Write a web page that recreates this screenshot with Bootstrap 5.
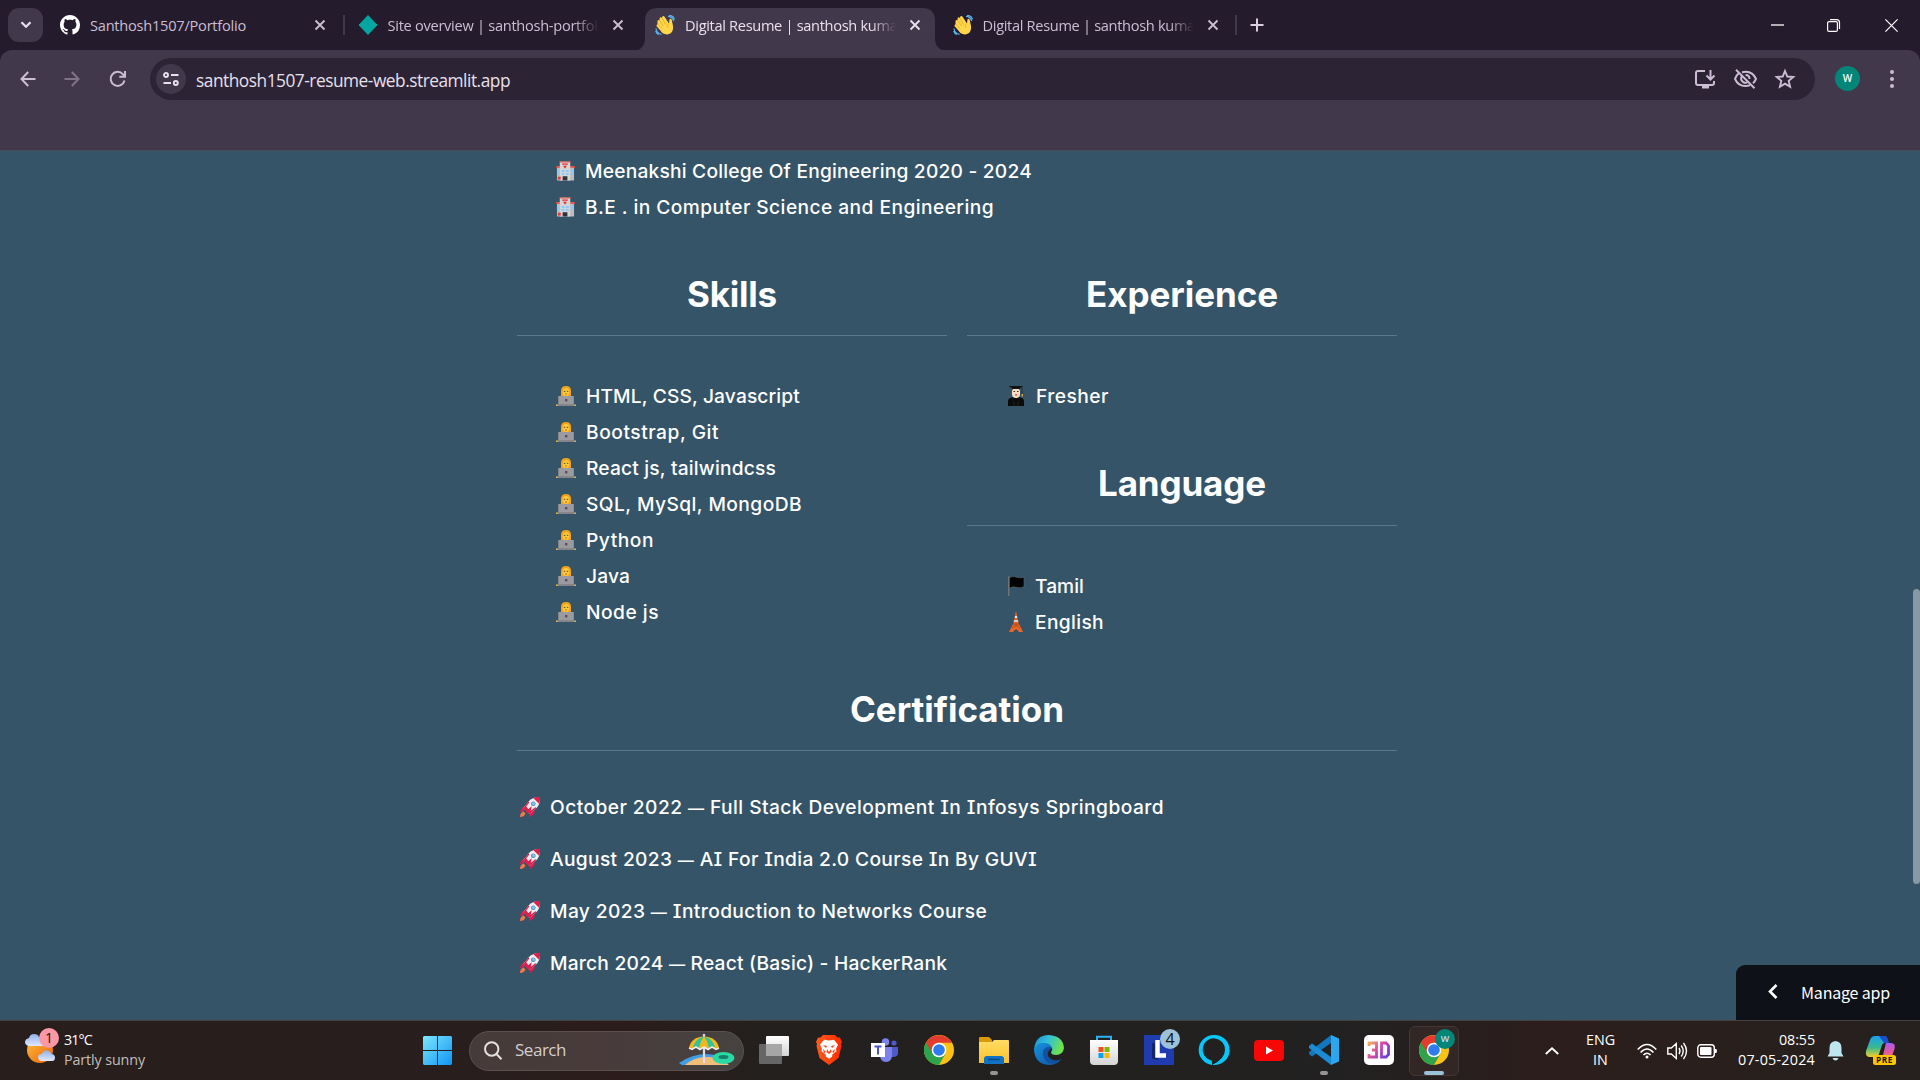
<!DOCTYPE html>
<html lang="en">
<head>
<meta charset="utf-8">
<title>Digital Resume | santhosh kumar</title>
<link href="https://cdn.jsdelivr.net/npm/bootstrap@5.3.0/dist/css/bootstrap.min.css" rel="stylesheet">
<style>
body{width:1920px;height:1080px;overflow:hidden;background:#355468;font-family:"Open Sans","Noto Sans",sans-serif;color:#fff}
svg{display:block;flex:none;overflow:visible}
.fit{display:inline-block;white-space:nowrap}
.dash{font-size:.84em}
.strip{height:50px;background:#241b2c;color:#cbbdd3;font-size:14.6px}
.tabmenu{width:35px;height:34px;border-radius:11px;background:#42384b;margin:0 13px 0 8px}
.tab-item{width:297.5px;height:43px;padding:0 10px 0 4px;flex:none}
.tab-name{width:211px;margin-left:10px;overflow:hidden;white-space:nowrap;line-height:24px;-webkit-mask-image:linear-gradient(90deg,#000 88%,transparent);mask-image:linear-gradient(90deg,#000 88%,transparent)}
.tab-name.whole{-webkit-mask-image:none;mask-image:none}
.tab-x{margin-left:13px}
.tab-on{position:relative;color:#e8e0ec}
.tab-on .tab-bg{position:absolute;left:-20px;top:0}
.tab-on>*:not(.tab-bg){position:relative}
.divide{width:2px;height:20px;background:#42384b;margin-right:-1px}
.toolwrap{background:#241b2c}
.toolbar{height:100px;background:#42384b;padding-top:8px;border-radius:12px 12px 0 0}
.omni{width:1665px;height:42px;border-radius:21px;background:#2c2335;color:#e8e0ec;font-size:17.3px}
.siteinfo{width:30px;height:30px;border-radius:50%;background:#42384b;margin:0 10px 0 6px}
.avatar{width:25px;height:25px;border-radius:50%;background:#038577;font-size:10px;font-weight:600;margin-bottom:1px}
.page-area{height:870px;border-top:1px solid #4d4953;font-family:Inter,sans-serif;font-feature-settings:"cv08";position:relative}
.resume{width:880px;margin:0 auto 0 517px;padding-top:2px}
.resume h2{font-size:35px;line-height:43px;font-weight:700;margin:0;text-align:center;padding-top:48px}
.line{height:1px;background:#5d778a;margin:19px 0 42px}
.entry{height:36px;font-size:19.2px;line-height:36px;font-weight:450;padding-left:39px}
.entry svg{margin-right:10px}
.certs{margin-top:-12px}
.certs .entry{height:52px;line-height:52px;padding-left:3px}
.certs .entry svg{margin-right:10px}
.duo{column-gap:20px}
.duo>div{width:430px}
.manage{position:absolute;right:0;bottom:0;width:184px;height:55px;background:#0e1118;border-radius:9px 0 0 0;font-family:"Noto Sans CJK JP",sans-serif;font-size:16px;padding:0 0 2px 31px}
.thumb{position:absolute;right:0;top:438px;width:7px;height:295px;border-radius:4px;background:#8898a5}
.taskbar{height:60px;background:linear-gradient(90deg,#281f1d,#271e1d 25%,#2c1c1c 32%,#23201e 40%,#222120 58%,#222121 70%,#2b1d1c 80%,#2b1f1c 84%,#25201e);border-top:1px solid #47413f;font-size:14.3px}
.two{line-height:20px;padding-bottom:2px}
.searchbox{width:275px;height:40px;border-radius:20px;background:linear-gradient(90deg,#463b3a,#493b3b 50%,#454341);border:1px solid #5b504f;color:#d3cfce;font-size:17px;margin-left:17px;padding:0 8px 1px 14px}
.app{width:50px;height:50px;border-radius:6px;position:relative;margin-right:5px;flex:none;padding-bottom:1px}
.app.on{background:#332726;border:1px solid #423736}
.app .run{position:absolute;bottom:1px;width:8px;height:4px;border-radius:2px;background:#989493}
.app.on .run{width:20px;background:#9bc2d8;bottom:0}
.dot{position:absolute;width:20px;height:20px;border-radius:50%;background:#9bc2d8;color:#111;line-height:20px;text-align:center}
</style>
</head>
<body class="d-flex flex-column">
<svg width="0" height="0" class="position-absolute">
<defs>
<linearGradient id="gWin" x1="0" y1="0" x2="1" y2="1"><stop stop-color="#7be8fb"/><stop offset="1" stop-color="#1193f5"/></linearGradient>
<linearGradient id="gSun" x1="0" y1="0" x2="1" y2="1"><stop stop-color="#f9c23a"/><stop offset="1" stop-color="#f0600d"/></linearGradient>
<linearGradient id="gFold" x1="0" y1="0" x2="0" y2="1"><stop stop-color="#ffdd63"/><stop offset="1" stop-color="#fbc02f"/></linearGradient>
<linearGradient id="gEdgeA" x1="0" y1="0" x2="1" y2=".3"><stop stop-color="#1c8fd8"/><stop offset=".5" stop-color="#32bfd8"/><stop offset="1" stop-color="#6be34f"/></linearGradient>
<linearGradient id="gEdgeB" x1="0" y1="0" x2="1" y2="1"><stop stop-color="#1593dd"/><stop offset="1" stop-color="#0f4fa3"/></linearGradient>
<linearGradient id="g3d" gradientUnits="userSpaceOnUse" x1="5" y1="7" x2="25" y2="23"><stop stop-color="#f2b35c"/><stop offset=".45" stop-color="#d248a8"/><stop offset="1" stop-color="#5a35e8"/></linearGradient>
<linearGradient id="gCoA" x1="0" y1="0" x2="0" y2="1"><stop stop-color="#19a0f0"/><stop offset=".55" stop-color="#3bb88e"/><stop offset="1" stop-color="#f0d02c"/></linearGradient>
<linearGradient id="gCoB" x1="0" y1="0" x2="0" y2="1"><stop stop-color="#a65cf0"/><stop offset=".6" stop-color="#e8589a"/><stop offset="1" stop-color="#fb8a4b"/></linearGradient>
<linearGradient id="gBrave" x1="0" y1="0" x2="1" y2="0"><stop stop-color="#ff5a1c"/><stop offset="1" stop-color="#ff2a00"/></linearGradient>
<linearGradient id="gCloud" x1="0" y1="0" x2="0" y2="1"><stop stop-color="#8fb0ee"/><stop offset="1" stop-color="#dfe9fb"/></linearGradient>
<linearGradient id="gGrey" x1="0" y1="0" x2="0" y2="1"><stop stop-color="#fff"/><stop offset="1" stop-color="#d4d4d4"/></linearGradient>
<symbol id="x" viewBox="0 0 12 12"><path d="M1.500 1.500l9 9M10.500 1.500l-9 9" stroke="currentColor" stroke-width="1.900" fill="none"/></symbol>
<symbol id="wave" viewBox="0 0 20 20"><path d="M13 1.300q4.500.2 5.700 4.700M14 .3q4.200.2 5.500 4M1 13.500q.7 5 5.500 5.800M.6 16q1 2.500 3.200 3.500" stroke="#5aaeea" stroke-width="1.300" fill="none"/><path d="M2.500 5.800q.8-1.500 2-.4l.1-2.200q1-1.600 2.200-.2l.5-1.500q1.400-1.300 2.400.4L14 8.500l.4-4q1.100-1.700 2.300.2l1.300 6.300q1 7.200-5.600 8.400-4.500.3-6.600-3.300L1.600 11.300q-.5-1.700.9-2z" fill="#ffd54a"/><path d="M4.500 5.400L8.500 11M6.900 3l3.800 6.700M2.600 9l4.200 4.500M14 8.500q-2.500 1.500-1.300 4.500" stroke="#e3a224" stroke-width=".7" fill="none"/></symbol>
<symbol id="hosp" viewBox="0 0 20 20"><path d="M1 5h18v15H1z" fill="#b9bcc0"/><path d="M0 5h20v1.600H0z" fill="#f04438"/><path d="M4 0h11v20H4z" fill="#d4d5d9"/><path d="M3.500 0h12v1H3.500z" fill="#f04438"/><path d="M6.500 2h6v1.500h-6zM7.500 4.500h4l-2 3z" fill="#ea2f2a"/><path d="M6 9h3v2H6zM10.500 9h3v2h-3zM6 12h3v2H6zM10.500 12h3v2h-3zM1 8.500h2v4.500H1zM16.500 8.500h2v4.500h-2z" fill="#8bc8f5"/><path d="M7 15.500h5V20H7z" fill="#33343a"/><path d="M2 16h3v3H2z" fill="#e23c33"/></symbol>
<symbol id="dev" viewBox="0 0 20 20"><path d="M5 12V5q0-5 5-5t5 5v7z" fill="#f6a11b"/><ellipse cx="10" cy="6" rx="3.300" ry="4" fill="#ffcb3f"/><path d="M7.800 5.300h1.500M10.800 5.300h1.500" stroke="#684217"/><path d="M9 8h2" stroke="#b8423a" stroke-width=".8"/><path d="M0 18.500h20V20H0z" fill="#f5b92b"/><path d="M2.300 10h15.500v8.500H2.300z" fill="#9b9b9f"/><path d="M1.500 18h17v2h-17z" fill="#84868c"/><path d="M9 13h2.400v2.400H9z" fill="#594d6b"/></symbol>
<symbol id="grad" viewBox="0 0 16 20"><path d="M0 20v-5q0-4 8-4t8 4v5z" fill="#0b0b0c"/><path d="M4 3h8v5q0 4-4 4T4 8z" fill="#f8dcc5"/><path d="M4 4.500L5 3h6l1 1.500V1H4z" fill="#1a1718"/><path d="M1.500 1.200V0h13v1.200L8 2.500z" fill="#111"/><path d="M14 1.500V9" stroke="#2b2420" stroke-width=".8"/><path d="M13.500 8h1.500v2.500h-1.500z" fill="#d8a32f"/><path d="M5.500 5.500h1.600M9 5.500h1.600" stroke="#332"/><path d="M7 8.800h2" stroke="#d8373c" stroke-width="1.200"/><path d="M6 15v5M10 15v5" stroke="#2a2a2b" stroke-width=".7"/></symbol>
<symbol id="flag" viewBox="0 0 17 20"><path d="M.8.300V20" stroke="#77797b" stroke-width="1.300"/><path d="M1.500 1.700Q5-.5 8 1t8 .3v9.500q-4 1.700-7.500.5t-7 .8z" fill="#020202" stroke="#5c6266" stroke-width=".6"/></symbol>
<symbol id="tower" viewBox="0 0 14 20"><path d="M6.600 0h.8L8 4l1.500 7L14 20h-4Q7 14.500 4 20H0l4.500-9L6 4z" fill="#ee6425"/><path d="M6 4h2l.3 2H5.700zM5 8.300h4l.4 1.500H4.600z" fill="#e6e4e4"/><path d="M4.500 12h5M3 16l6.500-4M11 16l-6.500-4" stroke="#933b19" stroke-width=".6"/></symbol>
<symbol id="rocket" viewBox="0 0 20 20"><path d="M5 9.500Q1.500 10 0 15q2-.8 4-.5zM10.500 15q-.5 3.500-1.500 5 4.500-1 6-6z" fill="#e01e4c"/><path d="M3.500 14.500l2 2Q4 20 0 20q0-4.500 3.500-5.500z" fill="#f4784b"/><path d="M20 0q.5 7-4 11.500L9.500 17 3.500 11 8.500 4.500Q13-.2 20 0z" fill="#f3eff2"/><path d="M20 0q-4-.3-6.800 1l5.800 5.800Q20.300 4 20 0zM3.500 11l2-2.500L9 13l-1.500 3.200zM7 13.500l4.500-4.200Q12 13.500 8.500 16.500zM16 11.500L9.500 17l-1-1.200L15.500 10zM3.500 11L8.500 4.500l1 .8L5 11z" fill="#e01e4c"/><circle cx="13.300" cy="6.700" r="2.300" fill="#4a87b5"/><circle cx="13.500" cy="6.500" r="1.500" fill="#8bc5e8"/></symbol>
<symbol id="chrome" viewBox="0 0 30 30"><circle cx="15" cy="15" r="15" fill="#fbc116"/><path d="M15 15L2 7.500A15 15 0 0 0 15 30l6.500-11.200z" fill="#2fa24c"/><path d="M2 7.500A15 15 0 0 1 28 7.800H15A7.300 7.300 0 0 0 8.700 18.600z" fill="#e33b2e"/><circle cx="15" cy="15" r="7.300" fill="#fff"/><circle cx="15" cy="15" r="5.800" fill="#2c7cf0"/></symbol>
</defs>
</svg>

<header class="strip d-flex align-items-center flex-none">
  <div class="tabmenu d-flex align-items-center justify-content-center flex-shrink-0"><svg width="12" height="8" viewBox="0 0 12 8"><path d="M1.500 1.200L6 5.800l4.500-4.600" fill="none" stroke="#e8e0ec" stroke-width="2.200"/></svg></div>
  <div class="tab-item d-flex align-items-center">
    <svg width="20" height="20" viewBox="0 0 16 16" fill="#fff"><path d="M8 0C3.580 0 0 3.580 0 8c0 3.540 2.290 6.530 5.470 7.590.4.070.55-.17.55-.38 0-.19-.01-.82-.01-1.490-2.010.37-2.530-.49-2.690-.94-.09-.23-.48-.94-.82-1.130-.28-.15-.68-.52-.01-.53.63-.01 1.080.58 1.230.82.72 1.210 1.870.87 2.330.66.07-.52.28-.87.51-1.070-1.780-.2-3.640-.89-3.640-3.950 0-.87.310-1.590.82-2.150-.08-.2-.36-1.020.08-2.120 0 0 .67-.21 2.200.82.64-.18 1.320-.27 2-.27s1.360.09 2 .27c1.530-1.040 2.200-.82 2.200-.82.44 1.100.16 1.920.08 2.120.51.56.82 1.270.82 2.150 0 3.070-1.870 3.750-3.650 3.950.29.25.54.73.54 1.480 0 1.070-.01 1.930-.01 2.200 0 .21.15.46.55.38A8.010 8.010 0 0 0 16 8c0-4.420-3.580-8-8-8"/></svg>
    <div class="tab-name whole"><span class="fit" data-w="156">Santhosh1507/Portfolio</span></div>
    <svg class="tab-x" width="12" height="12"><use href="#x"/></svg>
    <div class="divide ms-auto"></div>
  </div>
  <div class="tab-item d-flex align-items-center">
    <svg width="20" height="20" viewBox="0 0 20 20"><path d="M10 .5l9 9.500-9 9.500L1 10z" fill="#05a5a2" stroke="#05a5a2"/></svg>
    <div class="tab-name"><span class="fit" data-w="222">Site overview | santhosh-portfolio</span></div>
    <svg class="tab-x" width="12" height="12"><use href="#x"/></svg>
  </div>
  <div class="tab-item tab-on d-flex align-items-center">
    <svg class="tab-bg" width="318" height="48" viewBox="0 0 318 48"><path d="M0 47q14 0 14-13V17Q14 4 27 4h264q13 0 13 13v17q0 13 14 13z" fill="#42384b"/></svg>
    <svg width="20" height="20"><use href="#wave"/></svg>
    <div class="tab-name"><span class="fit" data-w="218">Digital Resume | santhosh kumar</span></div>
    <svg class="tab-x" width="12" height="12"><use href="#x"/></svg>
  </div>
  <div class="tab-item d-flex align-items-center">
    <svg width="20" height="20"><use href="#wave"/></svg>
    <div class="tab-name"><span class="fit" data-w="218">Digital Resume | santhosh kumar</span></div>
    <svg class="tab-x" width="12" height="12"><use href="#x"/></svg>
    <div class="divide ms-auto"></div>
  </div>
  <svg class="ms-1" width="14" height="14" viewBox="0 0 14 14"><path d="M7 .5v13M.5 7h13" stroke="#d9cfe0" stroke-width="2"/></svg>
  <div class="d-flex align-items-center ms-auto text-white" style="margin-right:22px;gap:43px">
    <svg width="13" height="13" viewBox="0 0 13 13"><path d="M0 6h13" stroke="currentColor" stroke-width="1.300"/></svg>
    <svg width="13" height="13" viewBox="0 0 13 13" fill="none" stroke="currentColor" stroke-width="1.200"><rect x=".6" y="2.600" width="9.800" height="9.800" rx="1.500"/><path d="M3 .6h6.500q3 0 3 3V10"/></svg>
    <svg style="margin-left:2px" width="13" height="13" viewBox="0 0 13 13"><path d="M.4.400l12.200 12.200M12.600.4L.4 12.600" stroke="currentColor" stroke-width="1.200"/></svg>
  </div>
</header>

<div class="toolwrap"><nav class="toolbar d-flex align-items-start">
  <div class="d-flex align-items-center w-100" style="height:42px">
    <div class="d-flex align-items-center" style="width:150px;padding-left:20px;color:#cbbdd3">
      <svg width="16" height="16" viewBox="0 0 16 16" fill="none" stroke="currentColor" stroke-width="2"><path d="M15.500 8H1.500M8.200 1L1.500 8l6.700 7"/></svg>
      <svg style="margin-left:28px;opacity:.45" width="16" height="16" viewBox="0 0 16 16" fill="none" stroke="currentColor" stroke-width="2"><path d="M.5 8h14M7.800 1l6.700 7-6.700 7"/></svg>
      <svg style="margin-left:30px" width="16" height="16" viewBox="0 0 16 16" fill="none" stroke="currentColor" stroke-width="2"><path d="M14.500 9.500A7 7 0 1 1 13 3.300L14.500 5"/><path d="M15 0v5.700H9.300"/></svg>
    </div>
    <div class="omni d-flex align-items-center">
      <div class="siteinfo d-flex align-items-center justify-content-center"><svg width="16" height="14" viewBox="0 0 16 14" fill="none" stroke="currentColor" stroke-width="1.900"><circle cx="3" cy="3" r="2"/><path d="M8 3h7.500M.5 11H8"/><circle cx="12.800" cy="11" r="2"/></svg></div>
      <span class="fit pt-1" data-w="314" style="line-height:24px">santhosh1507-resume-web.streamlit.app</span>
      <div class="d-flex align-items-center ms-auto" style="gap:18px;margin-right:20px;color:#cbbdd3">
        <svg width="22" height="20" viewBox="0 0 22 20" fill="none" stroke="currentColor" stroke-width="2"><path d="M11 2H4Q2 2 2 4v10q0 2 2 2h14q2 0 2-2v-2"/><path d="M8 18h7" stroke-width="3"/><path d="M16.500 1v9M12.500 6.500l4 4 4-4"/></svg>
        <svg width="23" height="20" viewBox="0 0 23 20" fill="none" stroke="currentColor" stroke-width="2"><path d="M5 4Q2.500 6 1 9.800 4 17 11.500 17q2.500 0 4.500-.9M8 3.200Q18 .8 22 9.800q-1.200 2.800-3 4.500"/><path d="M8 7q-2 3 .5 5.500t5 .5M11.500 6q4 0 4 4" /><path d="M2 .8l18.500 18.400"/></svg>
        <svg width="20" height="20" viewBox="0 0 20 20" fill="none" stroke="currentColor" stroke-width="1.900"><path d="M10 2l2.300 5.500 6 .5-4.600 3.900 1.400 5.900L10 14.600l-5.100 3.200 1.400-5.900L1.700 8l6-.5z"/></svg>
      </div>
    </div>
    <div class="avatar d-flex align-items-center justify-content-center" style="margin-left:20px">W</div>
    <svg style="margin-left:30px" width="4" height="18" viewBox="0 0 4 18" fill="#cbbdd3"><circle cx="2" cy="2" r="2"/><circle cx="2" cy="9" r="2"/><circle cx="2" cy="16" r="2"/></svg>
  </div>
</nav></div>

<main class="page-area flex-none">
  <div class="resume">
    <div class="entry d-flex align-items-center"><svg width="19" height="20"><use href="#hosp"/></svg><span class="fit" data-w="447">Meenakshi College Of Engineering 2020 - 2024</span></div>
    <div class="entry d-flex align-items-center"><svg width="19" height="20"><use href="#hosp"/></svg><span class="fit" data-w="409">B.E . in Computer Science and Engineering</span></div>
    <div class="duo d-flex">
      <div>
        <h2><span class="fit" data-w="90">Skills</span></h2>
        <div class="line"></div>
        <div class="entry d-flex align-items-center"><svg width="20" height="20"><use href="#dev"/></svg><span class="fit" data-w="214">HTML, CSS, Javascript</span></div>
        <div class="entry d-flex align-items-center"><svg width="20" height="20"><use href="#dev"/></svg><span class="fit" data-w="133">Bootstrap, Git</span></div>
        <div class="entry d-flex align-items-center"><svg width="20" height="20"><use href="#dev"/></svg><span class="fit" data-w="190">React js, tailwindcss</span></div>
        <div class="entry d-flex align-items-center"><svg width="20" height="20"><use href="#dev"/></svg><span class="fit" data-w="216">SQL, MySql, MongoDB</span></div>
        <div class="entry d-flex align-items-center"><svg width="20" height="20"><use href="#dev"/></svg><span class="fit" data-w="68">Python</span></div>
        <div class="entry d-flex align-items-center"><svg width="20" height="20"><use href="#dev"/></svg><span class="fit" data-w="44">Java</span></div>
        <div class="entry d-flex align-items-center"><svg width="20" height="20"><use href="#dev"/></svg><span class="fit" data-w="73">Node js</span></div>
      </div>
      <div>
        <h2><span class="fit" data-w="192">Experience</span></h2>
        <div class="line"></div>
        <div class="entry d-flex align-items-center"><svg style="margin:0 12px 0 2px" width="16" height="20"><use href="#grad"/></svg><span class="fit" data-w="73">Fresher</span></div>
        <h2><span class="fit" data-w="168">Language</span></h2>
        <div class="line" style="margin-top:20px"></div>
        <div class="entry d-flex align-items-center"><svg style="margin:0 10px 0 2px" width="17" height="20"><use href="#flag"/></svg><span class="fit" data-w="49">Tamil</span></div>
        <div class="entry d-flex align-items-center"><svg style="margin:0 12px 0 3px" width="14" height="20"><use href="#tower"/></svg><span class="fit" data-w="69">English</span></div>
      </div>
    </div>
    <h2><span class="fit" data-w="214">Certification</span></h2>
    <div class="line"></div>
    <div class="certs">
      <div class="entry d-flex align-items-center"><svg width="20" height="20"><use href="#rocket"/></svg><span class="fit" data-w="614">October 2022 <span class="dash">—</span> Full Stack Development In Infosys Springboard</span></div>
      <div class="entry d-flex align-items-center"><svg width="20" height="20"><use href="#rocket"/></svg><span class="fit" data-w="487">August 2023 <span class="dash">—</span> AI For India 2.0 Course In By GUVI</span></div>
      <div class="entry d-flex align-items-center"><svg width="20" height="20"><use href="#rocket"/></svg><span class="fit" data-w="437">May 2023 <span class="dash">—</span> Introduction to Networks Course</span></div>
      <div class="entry d-flex align-items-center"><svg width="20" height="20"><use href="#rocket"/></svg><span class="fit" data-w="397">March 2024 <span class="dash">—</span> React (Basic) - HackerRank</span></div>
    </div>
  </div>
  <div class="thumb"></div>
  <div class="manage d-flex align-items-center"><svg width="11" height="15" viewBox="0 0 11 15"><path d="M9.500 1L3 7.500 9.500 14" fill="none" stroke="#fff" stroke-width="2.600"/></svg><span class="fit" style="margin-left:23px" data-w="89">Manage app</span></div>
</main>

<footer class="taskbar d-flex align-items-center flex-none">
  <div class="d-flex align-items-center" style="width:398px;padding-left:25px">
    <svg width="34" height="36" viewBox="0 0 34 36" style="margin-bottom:8px"><circle cx="15" cy="21" r="13" fill="url(#gSun)"/><path d="M4 17q-4-1-4-4t4-4q1-4 5-4t5 3q5-1 6 3v6z" fill="url(#gCloud)"/><path d="M16 32q-3-1-3-4t4-3q1-4 5-3.500t4 3.500q4 0 4 3.500T27 32z" fill="url(#gCloud)"/><circle cx="24" cy="9" r="10" fill="#fc98a5"/><text x="24" y="14" text-anchor="middle" font-size="14" fill="#1a1212">1</text></svg>
    <div class="two" style="margin-left:5px"><div><span class="fit" data-w="28">31°C</span></div><div style="color:#c2bdbb"><span class="fit" data-w="81">Partly sunny</span></div></div>
  </div>
  <svg style="margin-left:25px" width="29" height="29" viewBox="0 0 29 29"><path d="M1 0h13v14H0V1zM15 0h13l1 1v13H15zM0 15h14v14H1l-1-1zM15 15h14v13l-1 1H15z" fill="url(#gWin)"/></svg>
  <div class="searchbox d-flex align-items-center">
    <svg width="18" height="19" viewBox="0 0 18 19" fill="none" stroke="#e4e0df" stroke-width="2"><circle cx="7.700" cy="8" r="6.700"/><path d="M12.500 13l5 5.200"/></svg>
    <span class="fit" style="margin-left:13px" data-w="51">Search</span>
    <svg class="ms-auto" width="56" height="32" viewBox="0 0 56 32"><path d="M0 29q13-9 28-9 7 0 13 3l-7 8H3z" fill="#3f9ee6"/><path d="M6 31q10-9 24-8 12 0 20 8z" fill="#f2bd78"/><path d="M25 0v29" stroke="#e3d9ef" stroke-width="2.200"/><path d="M10 14Q12 3 25 2.500 38 3 40 14l-3 1-4-2-4 2-4-2-4 2-4-2-4 2z" fill="#f7b51c"/><path d="M14 13Q17 4 25 2.500 22 6 20 14l-3-1zM36 13Q33 4 25 2.500 28 6 30 14l3-1z" fill="#2fc59b"/><path d="M10 14l3 1.500 4-2.500 4 2.500 4-2.500 4 2.500 4-2.500 4 2.500 3-1.500" stroke="#eee" fill="none" stroke-width="1.500"/><ellipse cx="44.500" cy="24" rx="11" ry="6" fill="#2bd9a5"/><ellipse cx="44.500" cy="23" rx="5" ry="2" fill="#16806c"/></svg>
  </div>
  <div class="d-flex align-items-center" style="margin-left:5px">
    <div class="app d-flex align-items-center justify-content-center"><svg width="30" height="28" viewBox="0 0 30 28"><rect y="8" width="23" height="20" rx="1" fill="#666"/><rect x="7" width="23" height="20" rx="1" fill="url(#gGrey)"/><path d="M7 8h16v12H7z" fill="#a6a6a6"/></svg></div>
    <div class="app d-flex align-items-center justify-content-center"><svg width="26" height="30" viewBox="0 0 26 30"><path d="M7 0h12l2.500 2.500L24 2.500 26 7l-1 2 .5 2-3 12L13 30 3.500 23 .5 11 1 9 0 7l2-4.500 2.500 0z" fill="url(#gBrave)"/><path d="M13 5.500l5-.8 4 5-2 4 .5 2.500-4 3-.5 2.500-3 2-3-2-.5-2.500-4-3 .5-2.500-2-4 4-5z" fill="#fff"/><path d="M7 10l4 1-1 2zM19 10l-4 1 1 2zM11 14l2 3 2-3 .5 3-2.500 2-2.500-2zM7 14l3 3-2 1zM19 14l-3 3 2 1z" fill="#ff4215"/></svg></div>
    <div class="app d-flex align-items-center justify-content-center"><svg width="27" height="24" viewBox="0 0 27 24"><circle cx="14.500" cy="4" r="3.800" fill="#7b83eb"/><circle cx="23" cy="5" r="2.600" fill="#5059c9"/><path d="M17 9h10v6q0 4-5 4h-4z" fill="#5059c9"/><path d="M9 9h12v8q0 7-6 7t-6-7z" fill="#7b83eb"/><path d="M0 5h14v14H0z" fill="#fff"/><path d="M3.500 8.500h7M7 8.500v8" stroke="#4b53bc" stroke-width="2"/></svg></div>
    <div class="app d-flex align-items-center justify-content-center"><svg width="30" height="30"><use href="#chrome"/></svg></div>
    <div class="app d-flex align-items-center justify-content-center"><svg width="30" height="27" viewBox="0 0 30 27"><path d="M0 1q0-1 1-1h9l3 3v3H0z" fill="#dc9a08"/><path d="M0 5h13l2-2h14q1 0 1 1v22H0z" fill="url(#gFold)"/><path d="M5 27v-5q0-3 3-3h14q3 0 3 3v5z" fill="#1172c4"/><path d="M9 22.500h12" stroke="#0b4a8a" stroke-width="1.500"/></svg><i class="run"></i></div>
    <div class="app d-flex align-items-center justify-content-center"><svg width="30" height="30" viewBox="0 0 30 30"><path d="M0 15Q1 0 15 0q14 1 15 13-1 7-8 7-5 0-5-3 2-2 1-4-3-5-9-4-7 1-9 7z" fill="url(#gEdgeA)"/><path d="M0 15Q2 8 9 8q8 0 9 5-4 0-5 4 0 8 8 9 4 0 6.500-2Q23 30 15 30 1 29 0 15z" fill="url(#gEdgeB)"/><path d="M18 13q-6-3-9 3-1 8 6 12 7 2 12.500-4-6 3-11-.5t-1.500-8z" fill="#12519f"/></svg></div>
    <div class="app d-flex align-items-center justify-content-center"><svg width="30" height="30" viewBox="0 0 30 30"><path d="M8 6V1.700h14V6" fill="none" stroke="#27b3f2" stroke-width="2"/><path d="M1 5h28v21q0 4-4 4H5q-4 0-4-4z" fill="url(#gGrey)"/><path d="M9.500 12h5v5h-5z" fill="#f25022"/><path d="M15.500 12h5v5h-5z" fill="#7fba00"/><path d="M9.500 18h5v5h-5z" fill="#00a4ef"/><path d="M15.500 18h5v5h-5z" fill="#ffb900"/></svg></div>
    <div class="app d-flex align-items-center justify-content-center"><svg width="30" height="30" viewBox="0 0 30 30"><path d="M0 0h30v30H0z" fill="#1e3bb0"/><path d="M10 8v14l4 1" stroke="#142468" stroke-width="4" fill="none"/><path d="M13.500 5v15.500H22" fill="none" stroke="#fff" stroke-width="4.500"/></svg><span class="dot" style="left:26px;top:3px;font-size:16px">4</span></div>
    <div class="app d-flex align-items-center justify-content-center"><svg width="30" height="30" viewBox="0 0 30 30"><path d="M15 0a15 15 0 0 0-2 29.900v-3q0-1.300-1.500-1.700A11.200 11.200 0 1 1 26 15q0 9-13 14.900h1A15 15 0 1 0 15 0z" fill="#05c7fb"/></svg></div>
    <div class="app d-flex align-items-center justify-content-center"><svg width="30" height="21" viewBox="0 0 30 21"><rect width="30" height="21" rx="4" fill="#f90606"/><path d="M12 6.500v8l7-4z" fill="#fff"/></svg></div>
    <div class="app d-flex align-items-center justify-content-center"><svg width="30" height="30" viewBox="0 0 30 30"><path d="M22 0v8L3 21.500 0 19v-2z" fill="#1277bd"/><path d="M22 30v-8L3 8.500 0 11v2z" fill="#1b8bd6"/><path d="M22 0l8 3.500v23L22 30z" fill="#2ea6ee"/></svg><i class="run"></i></div>
    <div class="app d-flex align-items-center justify-content-center"><svg width="30" height="30" viewBox="0 0 30 30"><rect width="30" height="30" rx="5" fill="#fff"/><path d="M5 11V8h7.500v6l-1 1 1 1v6H5v-3M8 15h4M17.500 8H22l2.500 2.500v9L22 22h-4.500z" fill="none" stroke="url(#g3d)" stroke-width="2.800"/></svg></div>
    <div class="app on d-flex align-items-center justify-content-center"><svg width="30" height="30"><use href="#chrome"/></svg><i class="run"></i><span class="dot" style="left:25px;top:2px;background:#038577;color:#cde;font-size:9px;font-weight:600">W</span></div>
  </div>
  <div class="d-flex align-items-center ms-auto">
    <svg width="14" height="8" viewBox="0 0 14 8"><path d="M.8 7L7 1.200 13.200 7" fill="none" stroke="#fff" stroke-width="1.900"/></svg>
    <div class="two text-center" style="margin-left:27px;width:29px"><div><span class="fit" data-w="29">ENG</span></div><div>IN</div></div>
    <svg style="margin-left:22px" width="20" height="16" viewBox="0 0 20 16" fill="none" stroke="#fff" stroke-width="1.500"><path d="M.7 6.500q9.300-10 18.600 0M3.600 9.500q6.400-7 12.800 0M6.400 12q3.600-3.700 7.200 0"/><circle cx="10" cy="14" r="1.500" fill="#fff" stroke="none"/></svg>
    <svg style="margin-left:10px" width="20" height="18" viewBox="0 0 20 18" fill="none" stroke="#fff" stroke-width="1.400"><path d="M.8 6v6h3.500l5 4.500v-15L4.300 6zM12 6q2 3 0 6M14.200 3.500q4 5.500 0 11M16.500 1q6 8 0 16"/></svg>
    <svg style="margin-left:10px" width="20" height="14" viewBox="0 0 20 14"><rect x=".8" y=".8" width="16.500" height="12.400" rx="3" fill="none" stroke="#fff" stroke-width="1.400"/><rect x="3" y="3" width="11.500" height="8" rx="1" fill="#fff"/><path d="M18 5h1q1 0 1 2t-1 2h-1z" fill="#fff"/></svg>
    <div class="two text-end" style="margin-left:20px;width:78px"><div><span class="fit" data-w="36">08:55</span></div><div><span class="fit" data-w="77">07-05-2024</span></div></div>
    <svg style="margin-left:12px" width="17" height="20" viewBox="0 0 17 20" fill="#bfe6ee"><path d="M8.500 0Q14.500.5 14.500 7v5l2 3.500H.5l2-3.500V7Q2.500.5 8.500 0zM5.500 17h6q-1 2.500-3 2.500t-3-2.500z"/></svg>
    <svg style="margin:0 24px 0 22px" width="30" height="29" viewBox="0 0 30 29"><path d="M9 0h9q2.500 0 3.500 4l1 3h-4q-2 0-3 3.500L13 18q-1 3-4 3H4q-5 0-4-6L4 4q1.500-4 5-4z" fill="url(#gCoA)"/><path d="M13 0h6q2 0 3 4l1 3h-5z" fill="#1c4fd0"/><path d="M20 7h5q5 0 3.500 6L26 20q-1 3-5 3h-8q3 0 4-4l2-8q.500-3 1-4z" fill="url(#gCoB)"/><rect x="7" y="19" width="23" height="10" rx="2.500" fill="#fdc500"/><text x="18.500" y="27" font-size="8.300" font-weight="700" text-anchor="middle" fill="#1a1408" letter-spacing=".5">PRE</text></svg>
  </div>
</footer>
<script src="https://cdn.jsdelivr.net/npm/bootstrap@5.3.0/dist/js/bootstrap.bundle.min.js"></script>
<script>
// Space the letters of each label so that it fills its own width
document.querySelectorAll('.fit').forEach(function(el){
  var n=el.textContent.length, s=(el.dataset.w-el.getBoundingClientRect().width)/n;
  el.style.letterSpacing=s.toFixed(3)+'px';
});
</script>
</body>
</html>
